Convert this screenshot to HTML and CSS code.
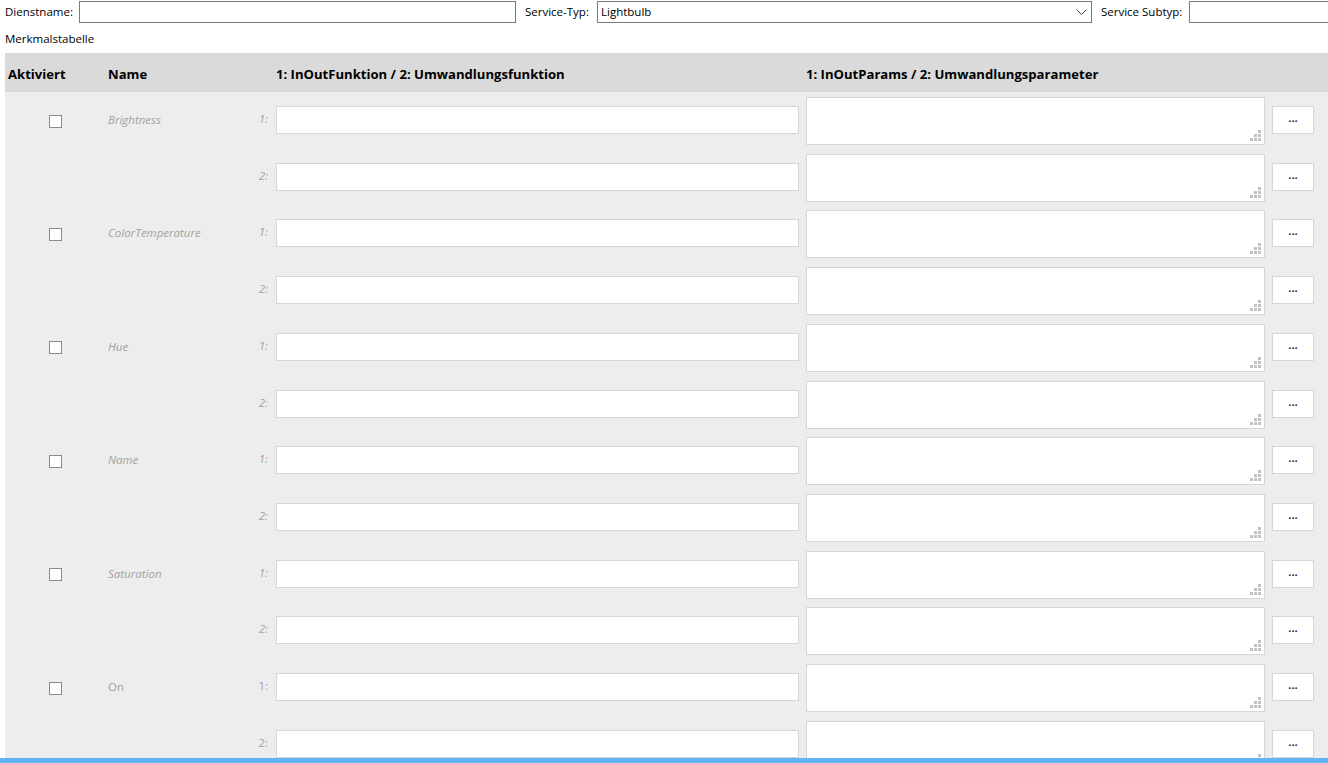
FILE: index.html
```html
<!DOCTYPE html>
<html lang="de">
<head>
  <meta charset="UTF-8" />
  <title>Dienst bearbeiten</title>
  <link rel="stylesheet" href="styles.css">
</head>
<body>
  <div class="top-bar">
    <label class="top-label lbl-name" for="dienstname">Dienstname:</label>
    <input type="text" id="dienstname" class="top-input input-name" />
    <span class="top-label lbl-type">Service-Typ:</span>
    <div class="select">
      <span>Lightbulb</span>
      <svg width="11" height="6" viewBox="0 0 11 6"><path d="M0.5 0.5 L5.5 5.5 L10.5 0.5" fill="none" stroke="#444" stroke-width="1"/></svg>
    </div>
    <label class="top-label lbl-subtype" for="subtyp">Service Subtyp:</label>
    <input type="text" id="subtyp" class="top-input input-subtype" />
  </div>

  <div class="caption">Merkmalstabelle</div>

  <div class="table">
    <div class="table-head">
      <div class="th th-active">Aktiviert</div>
      <div class="th th-name">Name</div>
      <div class="th th-func">1: InOutFunktion / 2: Umwandlungsfunktion</div>
      <div class="th th-params">1: InOutParams / 2: Umwandlungsparameter</div>
    </div>

    <div class="table-body" id="table-body"></div>
  </div>

  <div class="status-bar"></div>

  <script>
    const features = [
      { name: 'Brightness', optional: true },
      { name: 'ColorTemperature', optional: true },
      { name: 'Hue', optional: true },
      { name: 'Name', optional: true },
      { name: 'Saturation', optional: true },
      { name: 'On', optional: false }
    ];

    const grip = '<svg class="grip" width="11" height="11" viewBox="0 0 11 11">' +
      '<rect x="8" y="0" width="3" height="3"/><rect x="4" y="4" width="3" height="3"/>' +
      '<rect x="8" y="4" width="3" height="3"/><rect x="0" y="8" width="3" height="3"/>' +
      '<rect x="4" y="8" width="3" height="3"/><rect x="8" y="8" width="3" height="3"/></svg>';

    function fieldRow(num) {
      return '<div class="field-row">' +
        '<span class="num">' + num + ':</span>' +
        '<input type="text" class="func-input" />' +
        '<div class="params"><textarea></textarea>' + grip + '</div>' +
        '<button type="button" class="more-btn">...</button>' +
        '</div>';
    }

    const body = document.getElementById('table-body');
    body.innerHTML = features.map(f =>
      '<div class="feature' + (f.optional ? ' optional' : '') + '">' +
        '<div class="feature-check"><span class="checkbox"></span></div>' +
        '<div class="feature-name">' + f.name + '</div>' +
        '<div class="feature-fields">' + fieldRow(1) + fieldRow(2) + '</div>' +
      '</div>'
    ).join('');
  </script>
</body>
</html>
```

FILE: styles.css
```css
html, body {
  margin: 0;
  padding: 0;
  overflow: hidden;
}

body {
  font-family: "Open Sans", "Noto Sans", sans-serif;
  font-size: 11.5px;
  color: #000;
  background: #fff;
  width: 1328px;
  height: 763px;
}

.top-bar {
  display: flex;
  align-items: center;
  height: 23px;
  padding-left: 5px;
  white-space: nowrap;
  overflow: hidden;
}

.top-label {
  flex: none;
}

.lbl-name {
  width: 74px;
}

.lbl-type {
  width: 72px;
  margin-left: 9px;
}

.lbl-subtype {
  width: 88px;
  margin-left: 9px;
}

.top-input {
  flex: none;
  box-sizing: border-box;
  height: 22px;
  border: 1px solid #7a7a7a;
  padding: 0 3px;
  font: inherit;
  outline: none;
}

.input-name {
  width: 437px;
}

.input-subtype {
  width: 139px;
  border-right: none;
}

.select {
  flex: none;
  box-sizing: border-box;
  width: 495px;
  height: 22px;
  border: 1px solid #7a7a7a;
  display: flex;
  align-items: center;
  justify-content: space-between;
  padding: 0 4px 0 3px;
}

.select svg {
  margin-top: 1px;
}

.caption {
  box-sizing: border-box;
  height: 30px;
  padding: 8px 0 0 5px;
}

.table {
  margin-left: 5px;
}

.table-head {
  display: flex;
  align-items: center;
  box-sizing: border-box;
  height: 39px;
  padding-top: 2px;
  background: #dadada;
  font-size: 13.1px;
  font-weight: bold;
  white-space: nowrap;
}

.th-active {
  width: 97px;
  padding-left: 3px;
}

.th-name {
  width: 168px;
  padding-left: 3px;
}

.th-func {
  width: 530px;
}

.table-body {
  background: #ededed;
  padding-top: 5px;
  height: 700px;
}

.feature {
  display: flex;
  align-items: flex-start;
}

.feature-check {
  width: 100px;
  height: 48px;
  display: flex;
  align-items: center;
  justify-content: center;
}

.checkbox {
  box-sizing: border-box;
  width: 13px;
  height: 13px;
  background: #fff;
  border: 1px solid #8a8a8a;
}

.feature-name {
  width: 147px;
  padding-left: 3px;
  height: 48px;
  line-height: 45px;
  color: #a2a2a2;
}

.feature.optional .feature-name,
.feature.optional .num {
  font-style: italic;
}

.field-row {
  display: flex;
  align-items: flex-start;
  height: 56.73px;
}

.num {
  box-sizing: border-box;
  width: 21px;
  padding-right: 8px;
  margin-top: 8px;
  line-height: 28px;
  text-align: right;
  color: #a2a2a2;
}

.func-input {
  box-sizing: border-box;
  width: 523px;
  height: 28px;
  margin: 9px 7px 0 0;
  border: 1px solid #d7d7d7;
  background: #fff;
  outline: none;
}

.params {
  position: relative;
  width: 459px;
  height: 48px;
  margin-right: 7px;
}

.params textarea {
  box-sizing: border-box;
  display: block;
  width: 100%;
  height: 100%;
  margin: 0;
  border: 1px solid #d7d7d7;
  background: #fff;
  resize: none;
  outline: none;
}

.grip {
  position: absolute;
  right: 4px;
  bottom: 4px;
  fill: #c2c2c2;
}

.more-btn {
  box-sizing: border-box;
  width: 42px;
  height: 28px;
  margin-top: 9px;
  padding: 0 0 5px;
  border: 1px solid #d7d7d7;
  background: #fff;
  color: #222;
  font-family: "Open Sans", sans-serif;
  font-size: 11px;
  font-weight: bold;
  letter-spacing: 0;
}

.status-bar {
  position: fixed;
  left: 0;
  right: 0;
  bottom: 0;
  height: 5px;
  background: #62b4f5;
}
```
